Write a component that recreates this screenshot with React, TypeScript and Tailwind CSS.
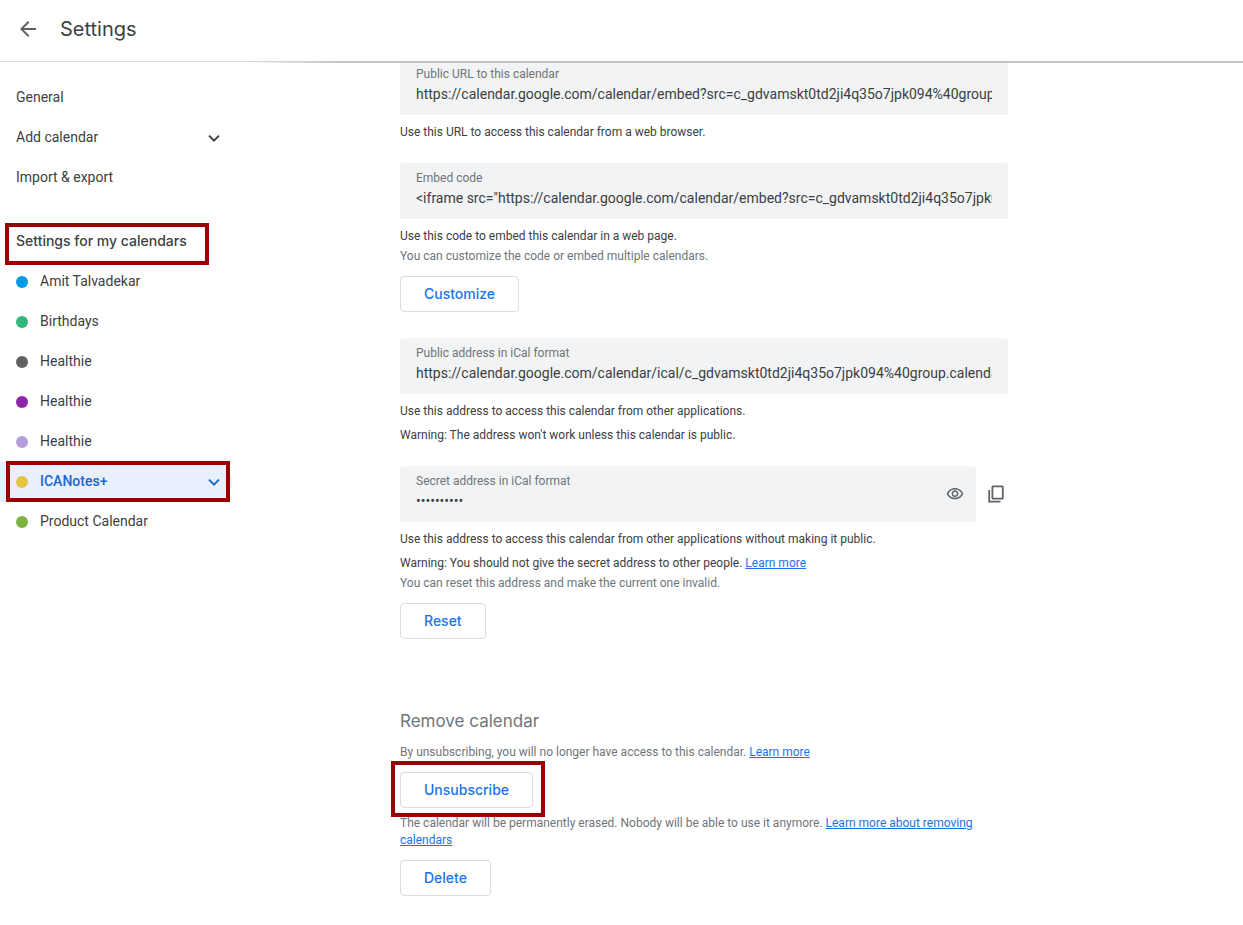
import { MdArrowBack, MdOutlineVisibility } from "react-icons/md";
import type { ReactNode } from "react";

const ROBOTO = "font-[Roboto,'Liberation_Sans',sans-serif]";
const DISPLAY = "font-[Inter,'Open_Sans',sans-serif]";

const calendars = [
  { name: "Amit Talvadekar", dot: "bg-[#039be5]" },
  { name: "Birthdays", dot: "bg-[#33b679]" },
  { name: "Healthie", dot: "bg-[#616161]" },
  { name: "Healthie", dot: "bg-[#8e24aa]" },
  { name: "Healthie", dot: "bg-[#b39ddb]" },
  { name: "ICANotes+", dot: "bg-[#e4c441]", active: true },
  { name: "Product Calendar", dot: "bg-[#7cb342]" },
];

function Chevron() {
  return (
    <svg viewBox="0 0 20 20" className="-mr-2 size-5" fill="none" stroke="currentColor" strokeWidth="2">
      <path d="M5 7.6L10 12.6L15 7.6" />
    </svg>
  );
}

function NavRow({ label, expandable }: { label: string; expandable?: boolean }) {
  return (
    <a href="#" className="flex h-10 items-center px-4 text-sm">
      <span className="flex-1 pb-0.5">{label}</span>
      {expandable && <Chevron />}
    </a>
  );
}

function Field({ id, label, value, type = "text", action }: {
  id: string;
  label: string;
  value: string;
  type?: string;
  action?: ReactNode;
}) {
  return (
    <div className="flex h-14 min-w-0 flex-1 items-center rounded-t bg-[#f1f3f4] px-4">
      <div className="flex min-w-0 flex-1 flex-col pb-0.5">
        <label htmlFor={id} className="text-xs leading-4 text-[#70757a]">{label}</label>
        <input id={id} type={type} readOnly value={value} className="h-6 w-full min-w-0 bg-transparent text-sm text-[#3c4043] outline-none" />
      </div>
      {action}
    </div>
  );
}

function OutlineButton({ children }: { children: ReactNode }) {
  return (
    <button type="button" className={`${DISPLAY} mt-3 block h-9 rounded border border-[#dadce0] bg-white px-[23px] text-sm font-medium text-[#1a73e8]`}>
      {children}
    </button>
  );
}

function TextLink({ children }: { children: ReactNode }) {
  return <a href="#" className="text-[#1a73e8] underline">{children}</a>;
}

function CopyIcon() {
  return (
    <svg viewBox="0 0 16 18" className="h-[18px] w-4" fill="none" stroke="#5f6368" strokeWidth="1.8">
      <rect x="4.4" y="1.4" width="10.4" height="12.2" rx="0.6" />
      <path d="M1.2 5V16.6H12.5" />
    </svg>
  );
}

export default function App() {
  return (
    <div className={`${ROBOTO} min-h-screen bg-white text-[#3c4043]`}>
      <header className="relative z-10 flex h-[62px] items-center border-b border-[#dadce0] bg-white pb-1 pl-4">
        <button type="button" aria-label="Back" className="flex size-6 items-center justify-center text-[#5f6368]">
          <MdArrowBack size={24} />
        </button>
        <h1 className={`${DISPLAY} ml-5 text-xl leading-6`}>Settings</h1>
        <div className="absolute top-[61px] right-0 left-60 h-0.5 bg-linear-to-r from-transparent to-[#c2c4c6] to-[100px]" />
      </header>

      <div className="flex">
        <nav aria-label="Settings" className="w-[232px] shrink-0 pt-4">
          <NavRow label="General" />
          <NavRow label="Add calendar" expandable />
          <NavRow label="Import & export" />
          <div className="relative mt-6 flex h-10 items-center px-4">
            <h2 className={`${DISPLAY} pb-0.5 text-sm font-medium`}>Settings for my calendars</h2>
            <div className="pointer-events-none absolute top-px left-[5px] h-[42px] w-[204px] border-4 border-[#990000]" />
          </div>
          {calendars.map((c, i) => (
            <div key={i} className="relative">
              <a
                href="#"
                className={`flex h-10 items-center px-4 text-sm ${c.active ? "rounded-r-full bg-[#e8f0fe] font-medium text-[#1967d2]" : ""}`}
              >
                <span className={`mr-3 size-3 rounded-full ${c.dot}`} />
                <span className="flex-1 pb-0.5">{c.name}</span>
                {c.active && <Chevron />}
              </a>
              {c.active && (
                <div className="pointer-events-none absolute -top-px left-1.5 h-[41px] w-56 border-4 border-[#990000]" />
              )}
            </div>
          ))}
        </nav>

        <main className="-mt-[3px] mr-6 ml-[168px] max-w-[608px] min-w-0 flex-1 pb-7 text-xs leading-4">
          <Field id="public-url" label="Public URL to this calendar" value="https://calendar.google.com/calendar/embed?src=c_gdvamskt0td2ji4q35o7jpk094%40group.calendar.google.com" />
          <p className="mt-[9px]">Use this URL to access this calendar from a web browser.</p>

          <section className="mt-[23px]">
            <Field id="embed" label="Embed code" value={'<iframe src="https://calendar.google.com/calendar/embed?src=c_gdvamskt0td2ji4q35o7jpk094%40group.calendar.google.com"></iframe>'} />
            <p className="mt-[9px]">Use this code to embed this calendar in a web page.</p>
            <p className="mt-1 text-[#70757a]">You can customize the code or embed multiple calendars.</p>
            <OutlineButton>Customize</OutlineButton>
          </section>

          <section className="mt-[26px]">
            <Field id="public-ical" label="Public address in iCal format" value="https://calendar.google.com/calendar/ical/c_gdvamskt0td2ji4q35o7jpk094%40group.calendar.google.com/public/basic.ics" />
            <p className="mt-[9px]">Use this address to access this calendar from other applications.</p>
            <p className="mt-2">Warning: The address won't work unless this calendar is public.</p>
          </section>

          <section className="mt-[23px]">
            <div className="flex items-center gap-3">
              <Field
                id="secret-ical"
                label="Secret address in iCal format"
                type="password"
                value="secretical"
                action={
                  <button type="button" aria-label="Show address" className="-mr-1 text-[#5f6368]">
                    <MdOutlineVisibility size={18} />
                  </button>
                }
              />
              <button type="button" aria-label="Copy address" className="mr-1">
                <CopyIcon />
              </button>
            </div>
            <p className="mt-[9px]">Use this address to access this calendar from other applications without making it public.</p>
            <p className="mt-2">Warning: You should not give the secret address to other people. <TextLink>Learn more</TextLink></p>
            <p className="mt-1 text-[#70757a]">You can reset this address and make the current one invalid.</p>
            <OutlineButton>Reset</OutlineButton>
          </section>

          <section className="mt-[70px] text-[#70757a]">
            <h2 className={`${DISPLAY} text-[17px] leading-6`}>Remove calendar</h2>
            <p className="mt-[11px]">By unsubscribing, you will no longer have access to this calendar. <TextLink>Learn more</TextLink></p>
            <div className="relative">
              <OutlineButton>Unsubscribe</OutlineButton>
              <div className="pointer-events-none absolute -top-[11px] -left-[9px] h-14 w-[154px] border-4 border-[#990000]" />
            </div>
            <p className="mt-[7px] -mb-px leading-[17px]">The calendar will be permanently erased. Nobody will be able to use it anymore. <TextLink>Learn more about removing calendars</TextLink></p>
            <OutlineButton>Delete</OutlineButton>
          </section>
        </main>
      </div>
    </div>
  );
}
